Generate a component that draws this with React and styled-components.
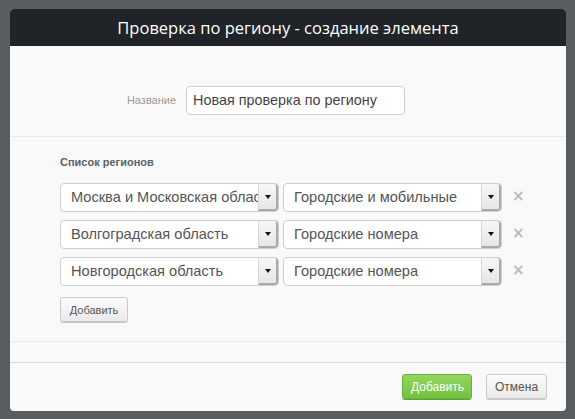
import React from "react";
import styled, { createGlobalStyle } from "styled-components";

const Global = createGlobalStyle`
  html, body { margin: 0; padding: 0; background: #595d60; }
  body { font-family: "Liberation Sans", Arial, sans-serif; }
  * { box-sizing: border-box; }
`;

const Page = styled.div`
  width: 575px;
  height: 419px;
  padding: 9px 9px 0 10px;
`;

const Dialog = styled.div`
  width: 556px;
  height: 402px;
  background: #f9f9f9;
  border-radius: 4px;
  overflow: hidden;
  display: flex;
  flex-direction: column;
`;

const Header = styled.div`
  height: 37px;
  background: #202327;
  color: #fff;
  font-family: "Open Sans", "DejaVu Sans", sans-serif;
  font-size: 16.5px;
  display: flex;
  align-items: center;
  justify-content: center;
  padding-bottom: 1px;
`;

const NameSection = styled.div`
  height: 91px;
  border-bottom: 1px solid #e9e9e9;
  display: flex;
  align-items: flex-start;
  justify-content: center;
  padding-top: 40px;
  padding-right: 44px;
  gap: 10px;
`;

const FieldLabel = styled.label`
  font-size: 11px;
  color: #9a9a9a;
  line-height: 29px;
`;

const TextInput = styled.div`
  width: 219px;
  height: 29px;
  border: 1px solid #cfcfcf;
  border-radius: 4px;
  background: #fff;
  font-size: 14.4px;
  color: #444;
  padding-left: 6px;
  line-height: 27px;
`;

const RegionSection = styled.div`
  height: 205px;
  border-bottom: 1px solid #e9e9e9;
  padding: 19px 0 0 50px;
  display: flex;
  flex-direction: column;
`;

const SectionTitle = styled.div`
  font-size: 11px;
  font-weight: bold;
  color: #5b626b;
  margin-bottom: 15px;
`;

const Rows = styled.div`
  display: flex;
  flex-direction: column;
  gap: 8px;
`;

const Row = styled.div`
  display: flex;
  align-items: center;
  gap: 4px;
`;

const Select = styled.div`
  width: ${(p) => p.$w}px;
  height: 29px;
  border: 1px solid #cfcfcf;
  border-radius: 4px;
  background: #fff;
  display: flex;
  overflow: hidden;
`;

const SelectText = styled.div`
  flex: 1;
  font-size: 14.6px;
  color: #555;
  padding-left: 10px;
  line-height: 27px;
  white-space: nowrap;
  overflow: hidden;
`;

const Arrow = styled.div`
  width: 20px;
  flex: none;
  background: linear-gradient(#f7f7f7, #e6e6e6);
  border-left: 1px solid #d6d6d6;
  border-right: 2px solid #a9a9a9;
  border-bottom: 2px solid #a9a9a9;
  border-radius: 0 3px 3px 0;
  display: flex;
  align-items: center;
  justify-content: center;
  &::after {
    content: "";
    border-left: 3px solid transparent;
    border-right: 3px solid transparent;
    border-top: 4px solid #111;
    margin-top: 1px;
  }
`;

const Remove = styled.span`
  margin-left: 6px;
  color: #bbb;
  font-size: 15px;
  font-weight: bold;
  font-family: "DejaVu Sans", sans-serif;
  line-height: 1;
  margin-top: -2px;
`;

const Button = styled.button`
  height: 25px;
  width: ${(p) => (p.$w ? p.$w + "px" : "auto")};
  padding: 0 8px;
  font-family: "Liberation Sans", Arial, sans-serif;
  font-size: ${(p) => p.$fs || 11}px;
  border-radius: 3px;
  cursor: pointer;
  color: ${(p) => (p.$primary ? "#fff" : "#555")};
  background: ${(p) =>
    p.$primary
      ? "linear-gradient(#94d65f, #72c241)"
      : "linear-gradient(#fdfdfd, #e9e9e9)"};
  border: 1px solid ${(p) => (p.$primary ? "#66b33a" : "#cacaca")};
  box-shadow: ${(p) => (p.$primary ? "0 1px 0 #5ea434" : "0 1px 0 #c6c6c6")};
`;

const AddWrap = styled.div`
  margin-top: 11px;
`;

const Spacer = styled.div`
  height: 21px;
  border-bottom: 1px solid #d3d9e3;
`;

const Footer = styled.div`
  flex: 1;
  display: flex;
  justify-content: flex-end;
  align-items: flex-start;
  padding: 11px 19px 0 0;
  gap: 14px;
`;

const rows = [
  ["Москва и Московская область", "Городские и мобильные"],
  ["Волгоградская область", "Городские номера"],
  ["Новгородская область", "Городские номера"],
];

export default function App() {
  return (
    <Page>
      <Global />
      <Dialog>
        <Header>Проверка по региону - создание элемента</Header>
        <NameSection>
          <FieldLabel>Название</FieldLabel>
          <TextInput>Новая проверка по региону</TextInput>
        </NameSection>
        <RegionSection>
          <SectionTitle>Список регионов</SectionTitle>
          <Rows>
            {rows.map(([a, b], i) => (
              <Row key={i}>
                <Select $w={219}>
                  <SelectText>{a}</SelectText>
                  <Arrow />
                </Select>
                <Select $w={219}>
                  <SelectText>{b}</SelectText>
                  <Arrow />
                </Select>
                <Remove>×</Remove>
              </Row>
            ))}
          </Rows>
          <AddWrap>
            <Button $w={68}>Добавить</Button>
          </AddWrap>
        </RegionSection>
        <Spacer />
        <Footer>
          <Button $primary $w={70} $fs={12}>Добавить</Button>
          <Button $w={61} $fs={12}>Отмена</Button>
        </Footer>
      </Dialog>
    </Page>
  );
}
